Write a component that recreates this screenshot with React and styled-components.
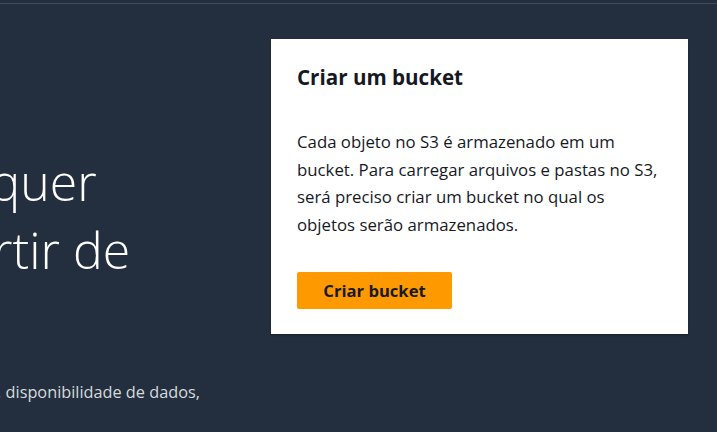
import React from 'react'
import styled, { createGlobalStyle } from 'styled-components'

const GlobalStyle = createGlobalStyle`
  html, body {
    margin: 0;
    background: #232f3e;
  }
  body {
    font-family: "Open Sans", "Noto Sans", sans-serif;
    overflow: hidden;
  }
`

const Page = styled.div`
  width: 717px;
  height: 432px;
  overflow: hidden;
  background: #232f3e;
  display: flex;
  flex-direction: column;
`

const TopRule = styled.div`
  flex: none;
  height: 3px;
  border-bottom: 1px solid #414d5c;
`

const Hero = styled.div`
  display: grid;
  grid-template-columns: minmax(0, 1fr) 417px;
  column-gap: 31px;
  padding: 35px 29px 0 0;
`

// the page is scrolled sideways: the intro starts left of the viewport
const Intro = styled.div`
  margin-left: -605px;
  white-space: nowrap;
  color: #ffffff;
`

const Kicker = styled.div`
  font-size: 14px;
  line-height: 20px;
  color: #d1d5db;
`

const Title = styled.h1`
  margin: 12px 0 21px;
  font-size: 44px;
  line-height: 56px;
  font-weight: 700;
`

const Subtitle = styled.p`
  margin: 0;
  font-size: 50px;
  line-height: 68px;
  font-weight: 300;
`

const Description = styled.p`
  margin: -2px 0 0;
  font-size: 16.3px;
  line-height: 28px;
  color: #d5dbdb;
`

const Card = styled.section`
  align-self: start;
  background: #ffffff;
  padding: 24px 26px 25px;
  box-shadow: 0 1px 2px rgba(0, 0, 0, 0.35);
  color: #16191f;
`

const CardTitle = styled.h2`
  margin: 0;
  font-size: 20.6px;
  line-height: 28px;
  font-weight: 700;
`

const CardText = styled.p`
  margin: 37px 0 34px;
  font-size: 16.8px;
  line-height: 27.5px;
  white-space: nowrap;
`

const PrimaryButton = styled.button`
  display: block;
  width: 155px;
  height: 37px;
  border: none;
  border-radius: 2px;
  background: #ff9900;
  color: #16191f;
  font-family: inherit;
  font-size: 16.6px;
  font-weight: 700;
  cursor: pointer;
`

export default function App() {
  return (
    <Page>
      <GlobalStyle />
      <TopRule />
      <Hero>
        <Intro>
          <Kicker>Armazenamento</Kicker>
          <Title>Amazon S3</Title>
          <Subtitle>
            Armazene e recupere qualquer<br />
            quantidade de dados, a partir de<br />
            qualquer lugar
          </Subtitle>
          <Description>
            O Amazon S3 é um<br />
            serviço de armazenamento de objetos que oferece escalabilidade líder do setor, disponibilidade de dados,<br />
            segurança e performance.
          </Description>
        </Intro>
        <Card>
          <CardTitle>Criar um bucket</CardTitle>
          <CardText>
            Cada objeto no S3 é armazenado em um<br />
            bucket. Para carregar arquivos e pastas no S3,<br />
            será preciso criar um bucket no qual os<br />
            objetos serão armazenados.
          </CardText>
          <PrimaryButton>Criar bucket</PrimaryButton>
        </Card>
      </Hero>
    </Page>
  )
}
